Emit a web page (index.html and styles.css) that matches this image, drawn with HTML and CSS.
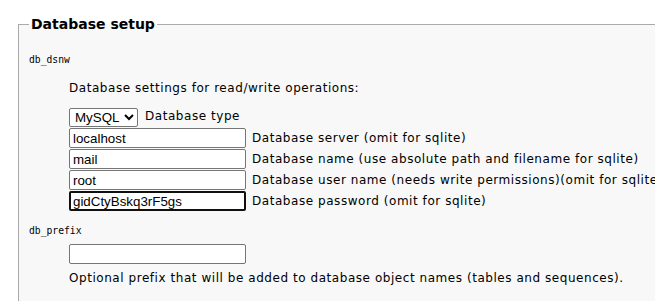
FILE: index.html
```html
<!DOCTYPE html>
<html lang="en">
<head>
  <meta charset="UTF-8" />
  <title>Roundcube Webmail Installer</title>
  <link rel="stylesheet" href="styles.css">
</head>
<body>

<fieldset class="setup">
  <legend>Database setup</legend>
  <dl class="configblock">
    <dt class="propname">db_dsnw</dt>
    <dd>
      <p class="hint">Database settings for read/write operations:</p>
      <div class="row row-select">
        <select name="_dbtype">
          <option selected>MySQL</option>
          <option>PostgreSQL</option>
          <option>SQLite</option>
        </select>
        <span>Database type</span>
      </div>
      <div class="row">
        <input type="text" value="localhost" />
        <span>Database server (omit for sqlite)</span>
      </div>
      <div class="row">
        <input type="text" value="mail" />
        <span>Database name (use absolute path and filename for sqlite)</span>
      </div>
      <div class="row">
        <input type="text" value="root" />
        <span>Database user name (needs write permissions)(omit for sqlite)</span>
      </div>
      <div class="row">
        <input type="text" class="focused" value="gidCtyBskq3rF5gs" />
        <span>Database password (omit for sqlite)</span>
      </div>
    </dd>

    <dt class="propname">db_prefix</dt>
    <dd>
      <div class="row">
        <input type="text" value="" />
      </div>
      <p class="hint">Optional prefix that will be added to database object names (tables and sequences).</p>
    </dd>
  </dl>
</fieldset>

</body>
</html>
```

FILE: styles.css
```css
* { box-sizing: border-box; }

html, body {
  margin: 0;
  padding: 0;
  background: #fff;
  overflow: hidden;
}

body {
  font-family: "DejaVu Sans", Verdana, sans-serif;
  font-size: 12px;
  letter-spacing: 0.55px;
  color: #000;
  padding-left: 18px;
  padding-top: 16px;
}

.setup {
  width: 760px;
  margin: 0;
  padding: 21px 10px 20px 10px;
  background: #f8f8f8;
  border: 1px solid #aaa;
  border-right: none;
  min-height: 400px;
}

.setup legend {
  font-size: 14px;
  line-height: 16px;
  font-weight: bold;
  letter-spacing: 0;
  padding: 0 2px;
}

.configblock {
  margin: 0;
}

.propname {
  font-family: "DejaVu Sans Mono", monospace;
  font-size: 9.7px;
  line-height: 14px;
  height: 14px;
  letter-spacing: 0;
  margin: 0 0 13px 0;
}

dd {
  margin: 0 0 0 40px;
}

.hint {
  margin: 0;
  line-height: 16px;
}

dd .hint:first-child {
  margin-bottom: 12px;
}

.row {
  display: flex;
  align-items: center;
  gap: 6px;
  height: 21px;
}

.row-select {
  height: 20px;
  align-items: flex-start;
  gap: 7px;
}

.row-select span {
  line-height: 19px;
}

.row input {
  align-self: flex-start;
  width: 177px;
  height: 20px;
  padding: 0 3px;
  border: 1px solid #767676;
  border-radius: 2px;
  background: #fff;
  font-family: "Liberation Sans", Arial, sans-serif;
  font-size: 13.33px;
  letter-spacing: 0;
  color: #000;
}

.row span {
  margin-top: -1px;
}

.row input.focused {
  border: 2px solid #101010;
  padding: 0 2px;
}

.row select {
  width: 69px;
  height: 19px;
  font-family: "Liberation Sans", Arial, sans-serif;
  font-size: 13.33px;
  letter-spacing: 0;
  border: 1px solid #767676;
  border-radius: 2px;
  background: #fff;
  color: #000;
  padding: 0 1px;
}

dd + .propname {
  margin-top: 12px;
  margin-bottom: 6px;
}

dd:last-child .hint {
  margin-top: 5px;
}
```
